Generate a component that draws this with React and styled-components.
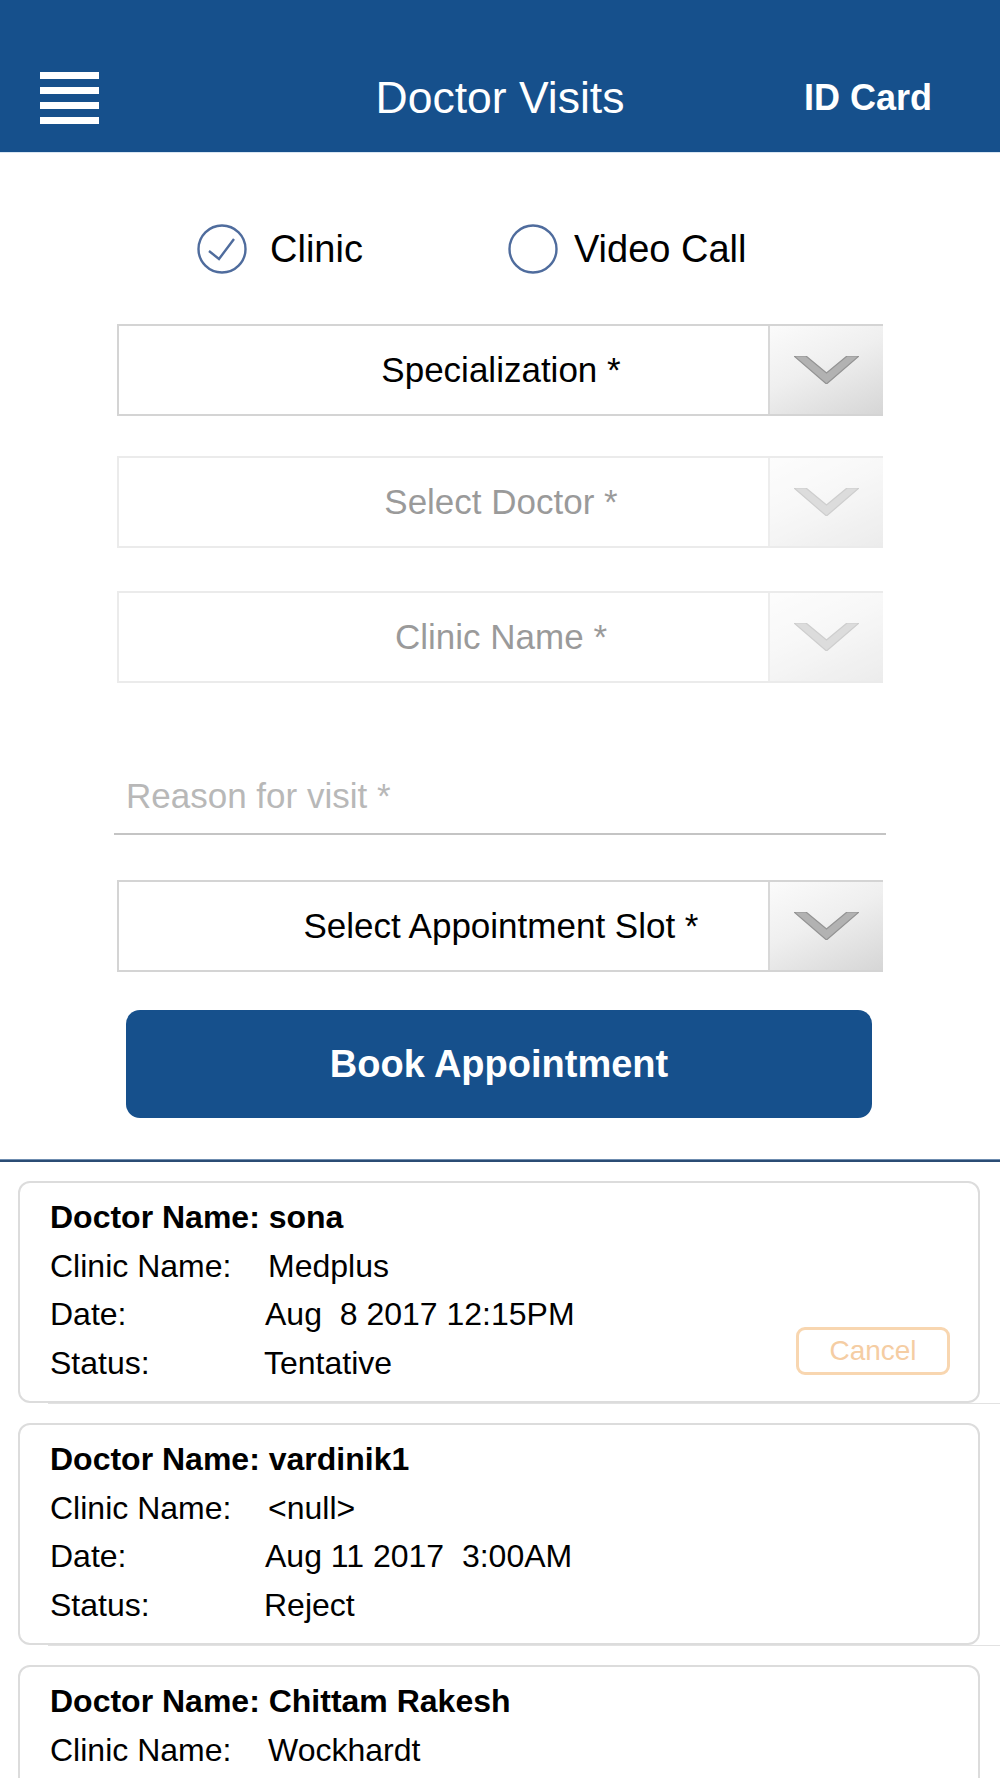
import React from 'react';
import styled, { createGlobalStyle } from 'styled-components';

const GlobalStyle = createGlobalStyle`
  html, body {
    margin: 0;
    padding: 0;
    background: #ffffff;
  }
  * {
    box-sizing: border-box;
  }
`;

const Page = styled.div`
  width: 1000px;
  height: 1778px;
  overflow: hidden;
  background: #fff;
  font-family: 'Liberation Sans', Arial, sans-serif;
  color: #000;
`;

const Header = styled.header`
  height: 153px;
  padding: 44px 40px 0 40px;
  background: #16508c;
  border-bottom: 1px solid #d9e6f2;
  display: grid;
  grid-template-columns: 1fr auto 1fr;
  align-items: center;
`;

const Burger = styled.div`
  width: 59px;
  display: flex;
  flex-direction: column;
  gap: 8px;
  span {
    display: block;
    height: 7px;
    background: #fff;
  }
`;

const Title = styled.h1`
  margin: 0;
  font-size: 44.5px;
  font-weight: 400;
  color: #fff;
`;

const IdCard = styled.div`
  justify-self: end;
  margin-right: 28px;
  font-size: 36px;
  font-weight: 700;
  color: #fff;
`;

const RadioRow = styled.div`
  display: flex;
  gap: 145px;
  margin-top: 71px;
  padding-left: 197px;
  height: 50px;
  align-items: center;
`;

const RadioOption = styled.label`
  display: flex;
  align-items: center;
  gap: ${p => p.$gap}px;
  font-size: 38px;
`;

const Form = styled.div`
  width: 766px;
  margin: 50px auto 0;
  display: flex;
  flex-direction: column;
`;

const Dropdown = styled.div`
  height: 92px;
  margin-top: ${p => p.$top || 0}px;
  display: flex;
  border: 2px solid #d4d4d4;
  border-right: none;
  background: #fff;
  opacity: ${p => (p.$disabled ? 0.45 : 1)};
`;

const DropLabel = styled.div`
  flex: 1;
  display: flex;
  align-items: center;
  justify-content: center;
  padding-left: 115px;
  font-size: 35px;
  color: ${p => (p.$disabled ? '#222' : '#000')};
`;

const DropButton = styled.div`
  width: 115px;
  border-left: 2px solid #d8d8d8;
  background: linear-gradient(155deg, #fbfbfb 0%, #efefef 45%, #d6d6d6 100%);
  display: flex;
  align-items: center;
  justify-content: center;
`;

const ReasonField = styled.div`
  margin: 88px -3px 0 -3px;
  height: 64px;
  padding: 5px 12px 0;
  border-bottom: 2px solid #c4c4c4;
  line-height: 40px;
  font-size: 35px;
  color: #b8b8b8;
`;

const BookButton = styled.button`
  margin: 38px 11px 0 9px;
  height: 108px;
  border: none;
  border-radius: 14px;
  background: #16508c;
  color: #fff;
  font-family: 'Liberation Sans', Arial, sans-serif;
  font-size: 38px;
  font-weight: 700;
`;

const Divider = styled.div`
  margin-top: 41px;
  height: 3px;
  background: #2b4c74;
  border-top: 1px solid #6f8db0;
`;

const List = styled.div`
  padding: 19px 20px 0 18px;
  display: flex;
  flex-direction: column;
`;

const Cell = styled.div`
  margin-bottom: 19px;
  margin-right: -20px;
`;

const Card = styled.div`
  margin-right: 20px;
  height: 222px;
  border: 2px solid #dcdcdc;
  border-radius: 12px;
  padding: 10px 28px 15px 30px;
  display: flex;
  justify-content: space-between;
  align-items: flex-end;
`;

const CellLine = styled.div`
  height: 1px;
  margin-left: 30px;
  background: #e2e2e2;
`;

const Details = styled.div`
  align-self: flex-start;
  display: flex;
  flex-direction: column;
`;

const DoctorName = styled.div`
  line-height: 48.5px;
  font-size: 32px;
  font-weight: 700;
`;

const Row = styled.div`
  display: grid;
  grid-template-columns: ${p => p.$label || 218}px auto;
  line-height: 48.5px;
  font-size: 32px;
`;

const CancelButton = styled.button`
  width: 154px;
  height: 48px;
  margin-bottom: 11px;
  border: 3px solid #f8d6b0;
  border-radius: 9px;
  background: #fff;
  color: #f5cda3;
  font-family: 'Liberation Sans', Arial, sans-serif;
  font-size: 28px;
`;

const Chevron = () => (
  <svg width="65" height="28" viewBox="0 0 65 28">
    <polygon
      points="0,0 12,0 32.5,17 53,0 65,0 32.5,28"
      fill="#b2b2b2"
      stroke="#939393"
      strokeWidth="1.2"
      strokeLinejoin="miter"
    />
  </svg>
);

const RadioCircle = ({ checked }) => (
  <svg width="50" height="50" viewBox="0 0 50 50">
    <circle cx="25" cy="25" r="23.5" fill="none" stroke="#4f6c9d" strokeWidth="2.4" />
    {checked && (
      <polyline points="12,27 22,35 37,15" fill="none" stroke="#4f6c9d" strokeWidth="2.4" />
    )}
  </svg>
);

const Select = ({ label, top, disabled }) => (
  <Dropdown $top={top} $disabled={disabled}>
    <DropLabel $disabled={disabled}>{label}</DropLabel>
    <DropButton>
      <Chevron />
    </DropButton>
  </Dropdown>
);

const visits = [
  { name: 'sona', clinic: 'Medplus', date: 'Aug\u00a0\u00a08 2017 12:15PM', status: 'Tentative', cancel: true },
  { name: 'vardinik1', clinic: '<null>', date: 'Aug 11 2017\u00a0\u00a03:00AM', status: 'Reject' },
  { name: 'Chittam Rakesh', clinic: 'Wockhardt', date: 'Aug 14 2017 10:30AM', status: 'Confirmed' },
];

export default function App() {
  return (
    <Page>
      <GlobalStyle />
      <Header>
        <Burger>
          <span />
          <span />
          <span />
          <span />
        </Burger>
        <Title>Doctor Visits</Title>
        <IdCard>ID Card</IdCard>
      </Header>

      <RadioRow>
        <RadioOption $gap={23}>
          <RadioCircle checked />
          Clinic
        </RadioOption>
        <RadioOption $gap={16}>
          <RadioCircle />
          Video Call
        </RadioOption>
      </RadioRow>

      <Form>
        <Select label="Specialization *" />
        <Select label="Select Doctor *" top={40} disabled />
        <Select label="Clinic Name *" top={43} disabled />
        <ReasonField>Reason for visit *</ReasonField>
        <Select label="Select Appointment Slot *" top={45} />
        <BookButton>Book Appointment</BookButton>
      </Form>

      <Divider />

      <List>
        {visits.map(v => (
          <Cell key={v.name}>
            <Card>
              <Details>
                <DoctorName>Doctor Name: {v.name}</DoctorName>
                <Row>
                  <span>Clinic Name:</span>
                  <span>{v.clinic}</span>
                </Row>
                <Row $label={215}>
                  <span>Date:</span>
                  <span>{v.date}</span>
                </Row>
                <Row $label={214}>
                  <span>Status:</span>
                  <span>{v.status}</span>
                </Row>
              </Details>
              {v.cancel && <CancelButton>Cancel</CancelButton>}
            </Card>
            <CellLine />
          </Cell>
        ))}
      </List>
    </Page>
  );
}
